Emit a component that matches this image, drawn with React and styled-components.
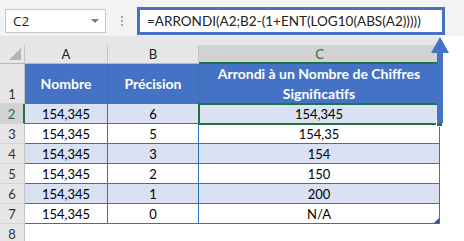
import styled, { createGlobalStyle, css } from "styled-components";

const GlobalStyle = createGlobalStyle`
  html, body {
    margin: 0;
    padding: 0;
    background: #ffffff;
  }
  body {
    font-family: Lato, "Liberation Sans", sans-serif;
  }
`;

const GREEN = "#217346";
const BLUE = "#4472c4";
const LINE = "#2f75b5";

const rows = [
  ["154,345", "6", "154,345"],
  ["154,345", "5", "154,35"],
  ["154,345", "3", "154"],
  ["154,345", "2", "150"],
  ["154,345", "1", "200"],
  ["154,345", "0", "N/A"],
];

const App = () => {
  return (
    <Window>
      <GlobalStyle />
      <FormulaBar>
        <NameBox>
          C2
          <Caret />
        </NameBox>
        <Grip>
          <i />
          <i />
          <i />
        </Grip>
        <FormulaInput>=ARRONDI(A2;B2-(1+ENT(LOG10(ABS(A2)))))</FormulaInput>
      </FormulaBar>

      <Sheet>
        <Band />
        <Filler />

        <Corner />
        <ColHead>A</ColHead>
        <ColHead>B</ColHead>
        <ColHead $selected>C</ColHead>
        <Filler />

        <RowHead>1</RowHead>
        <HeadCell>Nombre</HeadCell>
        <HeadCell>Précision</HeadCell>
        <HeadCell>
          Arrondi à un Nombre de Chiffres
          <br />
          Significatifs
        </HeadCell>
        <Filler />

        {rows.map((row, i) => (
          <Row key={i} index={i} row={row} />
        ))}

        <RowHead>8</RowHead>
        <Empty />
        <Empty />
        <Empty />
        <Filler />
      </Sheet>

      <Arrow viewBox="0 0 20 86" width="20" height="86">
        <polygon points="10,0 19,16 1,16" fill={BLUE} />
        <rect x="7" y="15" width="6" height="71" fill={BLUE} />
      </Arrow>
    </Window>
  );
};

const Row = ({ index, row }) => {
  const band = index % 2 === 0;
  const last = index === rows.length - 1;
  return (
    <>
      <RowHead $selected={index === 0}>{index + 2}</RowHead>
      <DataCell $band={band}>{row[0]}</DataCell>
      <DataCell $band={band}>{row[1]}</DataCell>
      <DataCell $band={band} $active={index === 0} $corner={last}>
        {row[2]}
      </DataCell>
      <Filler />
    </>
  );
};

const Window = styled.div`
  position: relative;
  width: 464px;
  height: 241px;
  overflow: hidden;
  background: #ffffff;
`;

const FormulaBar = styled.div`
  display: flex;
  align-items: flex-start;
  height: 36px;
  padding-left: 5px;
  background: #f3f3f3;
  box-sizing: border-box;
`;

const NameBox = styled.div`
  position: relative;
  display: flex;
  align-items: center;
  width: 101px;
  height: 24px;
  margin-top: 9px;
  padding-left: 7px;
  box-sizing: border-box;
  background: #ffffff;
  border: 1px solid #c6c6c6;
  font-family: "Open Sans", sans-serif;
  font-size: 13.5px;
  color: #222;
`;

const Caret = styled.span`
  position: absolute;
  right: 6px;
  top: 9px;
  width: 0;
  height: 0;
  border-left: 4px solid transparent;
  border-right: 4px solid transparent;
  border-top: 4px solid #7a7a7a;
`;

const Grip = styled.div`
  display: flex;
  flex-direction: column;
  gap: 2px;
  margin: 16px 0 0 15px;

  i {
    display: block;
    width: 2px;
    height: 2px;
    background: #a6a6a6;
  }
`;

const FormulaInput = styled.div`
  width: 308px;
  height: 28px;
  margin: 7px 0 0 14px;
  padding-left: 7px;
  box-sizing: border-box;
  border: 3px solid ${BLUE};
  background: #ffffff;
  font-size: 13.5px;
  line-height: 22px;
  color: #222;
  white-space: nowrap;
`;

const Sheet = styled.div`
  display: grid;
  grid-template-columns: 25px 83px 91px 241px 24px;
  grid-template-rows: 9px 19px 40px repeat(7, 20px);
  font-size: 13px;
`;

const Band = styled.div`
  grid-column: span 4;
  background: #e6e6e6;
`;

const Filler = styled.div`
  background: #ffffff;
`;

const Corner = styled.div`
  position: relative;
  background: #e6e6e6;
  border-right: 1px solid #c4c4c4;
  border-bottom: 1px solid #b8b8b8;

  &::after {
    content: "";
    position: absolute;
    right: 3px;
    bottom: 3px;
    width: 12px;
    height: 12px;
    background: #b4b4b4;
    clip-path: polygon(100% 0, 100% 100%, 0 100%);
  }
`;

const ColHead = styled.div`
  display: flex;
  align-items: center;
  justify-content: center;
  box-sizing: border-box;
  background: #e6e6e6;
  border-right: 1px solid #c4c4c4;
  border-bottom: 1px solid #b8b8b8;
  color: #222;

  ${({ $selected }) =>
    $selected &&
    css`
      background: #d2d2d2;
      color: ${GREEN};
      border-bottom: 2px solid ${GREEN};
      border-right: none;
    `}
`;

const RowHead = styled.div`
  display: flex;
  align-items: flex-end;
  justify-content: center;
  padding-bottom: 1px;
  box-sizing: border-box;
  background: #e6e6e6;
  border-right: 1px solid #c4c4c4;
  border-bottom: 1px solid #d4d4d4;
  color: #333;

  ${({ $selected }) =>
    $selected &&
    css`
      background: #d2d2d2;
      color: ${GREEN};
      border-right: 2px solid ${GREEN};
    `}
`;

const HeadCell = styled.div`
  display: flex;
  align-items: center;
  justify-content: center;
  text-align: center;
  box-sizing: border-box;
  background: ${BLUE};
  border-right: 1px solid ${LINE};
  color: #ffffff;
  font-weight: 700;
  font-size: 14px;
  line-height: 20px;
`;

const DataCell = styled.div`
  position: relative;
  display: flex;
  align-items: flex-end;
  justify-content: center;
  padding-bottom: 1px;
  box-sizing: border-box;
  background: ${({ $band }) => ($band ? "#d9e1f2" : "#ffffff")};
  border-right: 1px solid ${LINE};
  border-bottom: 1px solid ${LINE};
  color: #000;

  ${({ $active }) =>
    $active &&
    css`
      z-index: 1;
      outline: 2px solid ${GREEN};
      outline-offset: -1px;

      &::after {
        content: "";
        position: absolute;
        right: -4px;
        bottom: -4px;
        width: 5px;
        height: 5px;
        background: ${GREEN};
        border: 1px solid #ffffff;
      }
    `}

  ${({ $corner }) =>
    $corner &&
    css`
      &::after {
        content: "";
        position: absolute;
        right: 0;
        bottom: 0;
        width: 5px;
        height: 5px;
        background: #2f5597;
        clip-path: polygon(100% 0, 100% 100%, 0 100%);
      }
    `}
`;

const Empty = styled.div`
  background: #ffffff;
`;

const Arrow = styled.svg`
  position: absolute;
  left: 430px;
  top: 37px;
  z-index: 2;
`;

export default App;
